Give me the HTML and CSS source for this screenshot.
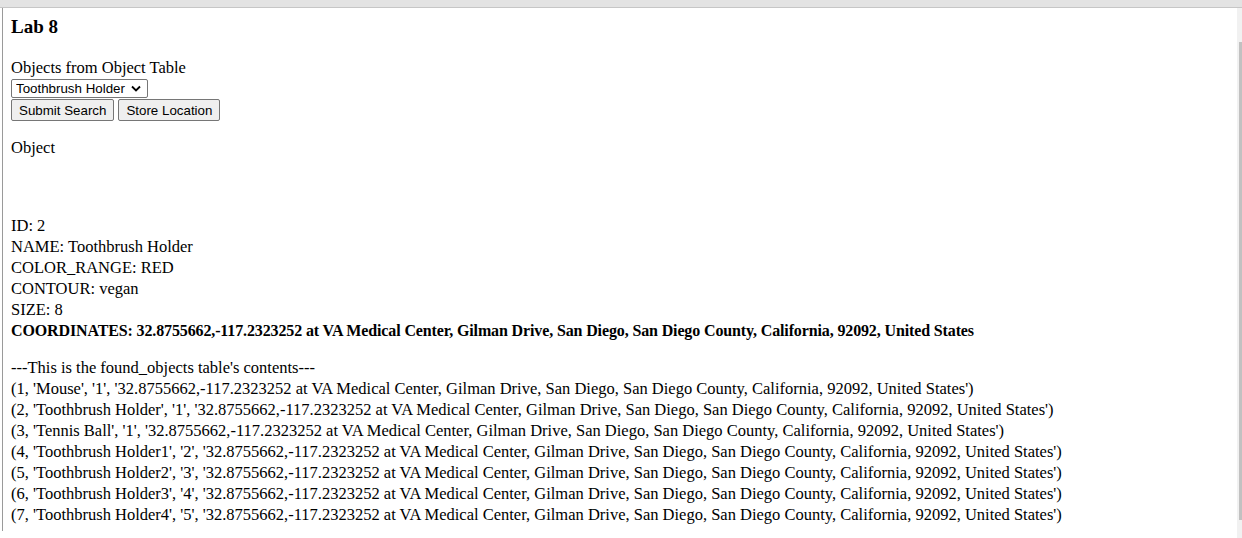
FILE: index.html
```html
<!DOCTYPE html>
<html>
<head>
<meta charset="utf-8">
<title>Lab 8</title>
<link rel="stylesheet" href="styles.css">
</head>
<body>
<div class="topbar"></div>
<div class="frame">
  <div class="page">
    <h3 class="title">Lab 8</h3>
    <form class="search">
      <div class="line">Objects from Object Table</div>
      <div class="select-wrap">
        <select class="select">
          <option>Toothbrush Holder</option>
        </select>
        <svg class="chev" width="10" height="7" viewBox="0 0 10 7"><path d="M1 1.5 L5 5.5 L9 1.5" fill="none" stroke="#000" stroke-width="1.8"/></svg>
      </div>
      <div class="buttons">
        <button type="button" class="btn">Submit Search</button>
        <button type="button" class="btn">Store Location</button>
      </div>
    </form>
    <p class="para">Object</p>
    <div class="details">
      <div class="line">ID: 2</div>
      <div class="line">NAME: Toothbrush Holder</div>
      <div class="line">COLOR_RANGE: RED</div>
      <div class="line">CONTOUR: vegan</div>
      <div class="line">SIZE: 8</div>
      <div class="line strong">COORDINATES: 32.8755662,-117.2323252 at VA Medical Center, Gilman Drive, San Diego, San Diego County, California, 92092, United States</div>
    </div>
    <div class="table">
      <div class="line">---This is the found_objects table's contents---</div>
      <div class="line">(1, 'Mouse', '1', '32.8755662,-117.2323252 at VA Medical Center, Gilman Drive, San Diego, San Diego County, California, 92092, United States')</div>
      <div class="line">(2, 'Toothbrush Holder', '1', '32.8755662,-117.2323252 at VA Medical Center, Gilman Drive, San Diego, San Diego County, California, 92092, United States')</div>
      <div class="line">(3, 'Tennis Ball', '1', '32.8755662,-117.2323252 at VA Medical Center, Gilman Drive, San Diego, San Diego County, California, 92092, United States')</div>
      <div class="line">(4, 'Toothbrush Holder1', '2', '32.8755662,-117.2323252 at VA Medical Center, Gilman Drive, San Diego, San Diego County, California, 92092, United States')</div>
      <div class="line">(5, 'Toothbrush Holder2', '3', '32.8755662,-117.2323252 at VA Medical Center, Gilman Drive, San Diego, San Diego County, California, 92092, United States')</div>
      <div class="line">(6, 'Toothbrush Holder3', '4', '32.8755662,-117.2323252 at VA Medical Center, Gilman Drive, San Diego, San Diego County, California, 92092, United States')</div>
      <div class="line">(7, 'Toothbrush Holder4', '5', '32.8755662,-117.2323252 at VA Medical Center, Gilman Drive, San Diego, San Diego County, California, 92092, United States')</div>
    </div>
  </div>
  <div class="scrollbar"><div class="thumb"></div></div>
</div>
</body>
</html>
```

FILE: styles.css
```css
html, body {
  margin: 0;
  padding: 0;
  background: #fff;
  overflow: hidden;
}
body {
  width: 1242px;
  height: 538px;
  font-family: "Liberation Serif", "Times New Roman", serif;
  font-size: 16.5px;
  color: #000;
}
.topbar {
  height: 7px;
  background: #e3e3e3;
  border-bottom: 1px solid #c6c6c6;
}
.frame {
  display: flex;
  align-items: flex-start;
  height: 530px;
}
.page {
  flex: 1;
  height: 523px;
  margin-left: 2px;
  border-left: 1px solid #9a9a9a;
  padding: 8px 0 0 8px;
  box-sizing: border-box;
}
.title {
  margin: 0;
  font-size: 19px;
  line-height: 21px;
  font-weight: bold;
}
.search {
  margin-top: 20px;
}
.line {
  line-height: 21px;
  white-space: nowrap;
}
.strong {
  font-weight: bold;
  font-size: 16px;
  letter-spacing: -0.13px;
}
.select-wrap {
  position: relative;
  display: flex;
  width: max-content;
  margin-top: 1px;
  height: 19px;
}
.select {
  -webkit-appearance: none;
  appearance: none;
  box-sizing: border-box;
  width: 137px;
  height: 19px;
  margin: 0;
  padding: 0 0 0 4px;
  border: 1px solid #767676;
  border-radius: 2px;
  background: #fff;
  font-family: "Liberation Sans", Arial, sans-serif;
  font-size: 13.33px;
  color: #000;
  display: block;
}
.chev {
  position: absolute;
  right: 7px;
  top: 6px;
  pointer-events: none;
}
.buttons {
  display: flex;
  gap: 4px;
  margin-top: 1px;
}
.btn {
  box-sizing: border-box;
  height: 22px;
  margin: 0;
  padding: 0 7px;
  border: 1px solid #767676;
  border-radius: 2px;
  background: #efefef;
  font-family: "Liberation Sans", Arial, sans-serif;
  font-size: 13.33px;
  color: #000;
}
.para {
  margin: 16px 0 0;
  line-height: 21px;
}
.details {
  margin-top: 57px;
}
.table {
  margin-top: 16px;
}
.scrollbar {
  width: 5px;
  height: 530px;
  background: #f1f1f1;
  display: flex;
  justify-content: flex-end;
}
.thumb {
  width: 3px;
  height: 478px;
  margin-top: 34px;
  background: #c1c1c1;
}
```
